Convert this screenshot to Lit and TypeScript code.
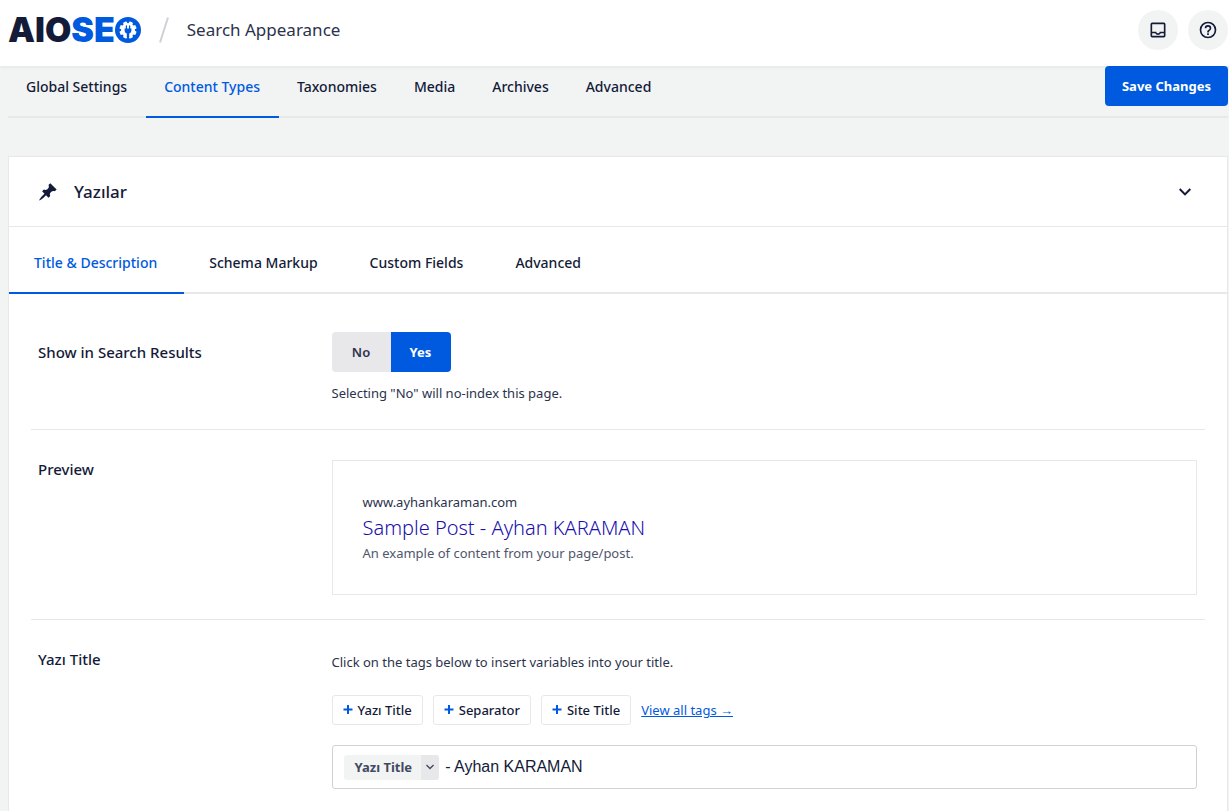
import { LitElement, html, css, svg } from "lit";
import { customElement, state } from "lit/decorators.js";
import { classMap } from "lit/directives/class-map.js";

const MAIN_TABS = ["Global Settings", "Content Types", "Taxonomies", "Media", "Archives", "Advanced"];
const CARD_TABS = ["Title & Description", "Schema Markup", "Custom Fields", "Advanced"];
const TAGS = ["Yazı Title", "Separator", "Site Title"];

const gearTeeth = [0, 45, 90, 135, 180, 225, 270, 315].map(
  (a) => svg`<rect x="11" y="4.4" width="4" height="4" rx="0.8" fill="#fff" transform=${`rotate(${a + 22.5} 13 13)`}/>`
);

const gear = html`<svg class="gear" viewBox="0 0 26 26" aria-hidden="true">
  <circle cx="13" cy="13" r="13" fill="#005ae0" />
  ${gearTeeth}
  <circle cx="13" cy="13" r="7" fill="#fff" />
  <path d="M11.4 9v3M14.6 9v3" stroke="#005ae0" stroke-width="1.3" stroke-linecap="round" />
  <path d="M9.6 11.6h6.8v2.2a2.800 2.800 0 0 1-2.200 2.700v4h-2.400v-4a2.800 2.800 0 0 1-2.200-2.700z" fill="#005ae0" />
</svg>`;

const inbox = html`<svg width="20" height="20" viewBox="0 0 24 24" fill="currentColor" aria-hidden="true">
  <path fill-rule="evenodd" d="M19 3H5a2 2 0 0 0-2 2v14a2 2 0 0 0 2 2h14a2 2 0 0 0 2-2V5a2 2 0 0 0-2-2zm0 16H5v-3h3.56a4 4 0 0 0 6.88 0H19v3zm0-5h-5a2 2 0 0 1-4 0H5V5h14v9z" />
</svg>`;

const help = html`<svg width="20" height="20" viewBox="0 0 24 24" fill="currentColor" aria-hidden="true">
  <path d="M11 18h2v-2h-2v2zm1-16a10 10 0 1 0 0 20 10 10 0 0 0 0-20zm0 18a8 8 0 1 1 0-16 8 8 0 0 1 0 16zm0-14a4 4 0 0 0-4 4h2a2 2 0 1 1 4 0c0 2-3 1.75-3 5h2c0-2.25 3-2.5 3-5a4 4 0 0 0-4-4z" />
</svg>`;

const pin = html`<svg class="pin" width="20" height="20" viewBox="0 0 20 20" fill="currentColor" aria-hidden="true">
  <path d="M10.44 3.02l1.82-1.82 6.36 6.35-1.83 1.82c-1.05-.68-2.48-.57-3.41.36l-.75.75c-.92.93-1.04 2.35-.35 3.41l-1.83 1.82-2.41-2.41-2.8 2.79c-.42.42-3.38 2.71-3.8 2.29s1.86-3.39 2.28-3.81l2.79-2.79L4.1 9.36l1.83-1.82c1.05.69 2.48.57 3.4-.36l.75-.75c.93-.92 1.05-2.35.36-3.41z" />
</svg>`;

const chevron = (size: number) => html`<svg width=${size} height=${size} viewBox="0 0 24 24" fill="currentColor" aria-hidden="true">
  <path d="M7.41 8.29 12 12.88l4.59-4.59L18 9.7l-6 6-6-6z" />
</svg>`;

const plus = html`<svg width="10" height="10" viewBox="0 0 10 10" aria-hidden="true">
  <path d="M5 0v9M0.500 4.500h9" stroke="#005ae0" stroke-width="2" />
</svg>`;

@customElement("app-root")
export class AppRoot extends LitElement {
  static styles = css`
    :host {
      display: flex;
      flex-direction: column;
      height: 100vh;
      overflow: hidden;
      background: #f2f4f4;
      color: #141b38;
      font: 14px/22px "Noto Sans", "Open Sans", sans-serif;
    }
    * { box-sizing: border-box; }
    button, input { font: inherit; color: inherit; margin: 0; }
    button { border: 0; background: none; padding: 0; cursor: pointer; }
    svg { display: block; flex: none; }

    .header {
      display: flex;
      align-items: center;
      flex: none;
      height: 66px;
      padding: 0 1px 6px 8px;
      background: #fff;
      box-shadow: 0 2px 3px #141b380d;
    }
    .logo {
      display: flex;
      align-items: center;
      font: 900 34px/40px Inter, sans-serif;
      color: #141b38;
      text-decoration: none;
    }
    .logo-blue { color: #005ae0; }
    .gear { width: 26px; height: 26px; }
    .slash { margin: 0 18px; }
    .page-title { margin: 0; flex: 1; font-size: 17px; font-weight: 400; line-height: 26px; color: #2c324c; }
    .round {
      display: grid;
      place-items: center;
      width: 40px;
      height: 40px;
      margin-left: 10px;
      border-radius: 50%;
      background: #f2f4f4;
    }

    .toolbar {
      display: flex;
      align-items: flex-start;
      justify-content: space-between;
      flex: none;
      margin: 0 1px 38px 8px;
      border-bottom: 2px solid #e8e8eb;
    }
    .tabs { display: flex; }
    .tab {
      padding: 0 19px 0 18px;
      border-bottom: 2px solid transparent;
      margin-bottom: -2px;
      font-weight: 500;
      white-space: nowrap;
    }
    .toolbar .tab { height: 52px; padding-bottom: 8px; }
    .tab.active { color: #005ae0; border-color: #005ae0; }
    .save {
      height: 40px;
      padding: 0 17px;
      border-radius: 4px;
      background: #005ae0;
      color: #fff;
      font-size: 13px;
      font-weight: 700;
    }

    .card {
      flex: 1 0 auto;
      margin: 0 1px 0 8px;
      border: 1px solid #e8e8eb;
      border-bottom: 0;
      background: #fff;
    }
    .card-head {
      display: flex;
      align-items: center;
      height: 70px;
      padding: 0 30px 0 29px;
      border-bottom: 1px solid #e8e8eb;
    }
    .card-title { margin: 0 0 0 16px; flex: 1; font-size: 17px; font-weight: 500; line-height: 26px; }
    .card-tabs { border-bottom: 2px solid #e8e8eb; }
    .card-tabs .tab { height: 67px; padding: 6px 27px 0 25px; }

    .row {
      display: grid;
      grid-template-columns: 1fr 3fr;
      margin: 0 22px;
      padding: 30px 0 24px;
      border-bottom: 1px solid #e8e8eb;
    }
    .row:first-of-type { padding-top: 38px; }
    .row:last-of-type { border-bottom: 0; }
    .cell { min-width: 0; padding: 0 8px 0 7px; }
    .name { display: block; margin: 0; font-size: 15px; font-weight: 500; line-height: 18px; }
    .row:first-of-type .name { line-height: 40px; }
    .hint { margin: 0; font-size: 13px; line-height: 24px; color: #2c324c; }

    .toggle { display: flex; width: fit-content; margin: 0 0 9px; padding: 0; border: 0; border-radius: 4px; overflow: hidden; }
    .option {
      display: grid;
      place-items: center;
      min-width: 60px;
      height: 40px;
      background: #e8e8eb;
      font-size: 13px;
      font-weight: 600;
      color: #2c324c;
      cursor: pointer;
    }
    .option:first-of-type { min-width: 59px; }
    .option.on { background: #005ae0; color: #fff; font-weight: 700; }
    .option input { appearance: none; position: absolute; width: 0; height: 0; }

    .preview { padding: 30px; border: 1px solid #e8e8eb; }
    .url { font-size: 13px; line-height: 22px; color: #2c324c; }
    .result { display: block; font-size: 20px; font-weight: 300; line-height: 30px; color: #1a0dab; text-decoration: none; }
    .desc { font-size: 13px; line-height: 21px; color: #50566b; }

    .tags { display: flex; align-items: center; gap: 10px; margin: 21px 0 20px; }
    .tag {
      display: flex;
      align-items: center;
      gap: 5px;
      height: 30px;
      padding: 0 10px;
      border: 1px solid #e8e8eb;
      border-radius: 3px;
      font-size: 13px;
      font-weight: 500;
      white-space: nowrap;
    }
    .all { color: #005ae0; font-size: 13px; }
    .editor {
      display: flex;
      align-items: center;
      height: 44px;
      padding: 0 11px;
      border: 1px solid #d0d1d7;
      border-radius: 3px;
      background: #fff;
    }
    .chip {
      display: flex;
      align-items: center;
      border-radius: 3px;
      overflow: hidden;
      background: #f2f4f4;
      color: #434960;
      font-size: 13px;
      font-weight: 700;
      line-height: 25px;
      padding-left: 11px;
      gap: 9px;
      white-space: nowrap;
    }
    .chip-arrow { display: grid; place-items: center; width: 18px; height: 25px; background: #e8e8eb; }
    .text {
      flex: 1;
      min-width: 0;
      margin-left: 6px;
      padding: 0;
      border: 0;
      outline: 0;
      background: none;
      font: 16px/24px "Liberation Sans", Arial, sans-serif;
    }
  `;

  @state() private mainTab = 1;
  @state() private cardTab = 0;
  @state() private show = true;
  @state() private title = "- Ayhan KARAMAN";

  private tabs(names: string[], current: number, pick: (i: number) => void) {
    return names.map(
      (n, i) => html`<button
        role="tab"
        aria-selected=${i === current}
        class=${classMap({ tab: true, active: i === current })}
        @click=${() => pick(i)}
      >${n}</button>`
    );
  }

  private option(label: string, value: boolean) {
    return html`<label class=${classMap({ option: true, on: this.show === value })}>
      <input type="radio" name="show" .checked=${this.show === value} @change=${() => (this.show = value)} />${label}
    </label>`;
  }

  render() {
    return html`
      <header class="header">
        <a class="logo" href="#" aria-label="AIOSEO">AIO<span class="logo-blue">SE</span>${gear}</a>
        <svg class="slash" width="10" height="26" viewBox="0 0 10 26" aria-hidden="true">
          <path d="M9 0.500 1 25.500" stroke="#d0d1d7" stroke-width="2" />
        </svg>
        <h1 class="page-title">Search Appearance</h1>
        <button class="round" aria-label="Notifications">${inbox}</button>
        <button class="round" aria-label="Help">${help}</button>
      </header>

      <div class="toolbar">
        <nav class="tabs" role="tablist">${this.tabs(MAIN_TABS, this.mainTab, (i) => (this.mainTab = i))}</nav>
        <button class="save">Save Changes</button>
      </div>

      <main class="card">
        <div class="card-head">
          ${pin}
          <h2 class="card-title">Yazılar</h2>
          <button aria-label="Collapse">${chevron(24)}</button>
        </div>
        <nav class="tabs card-tabs" role="tablist">${this.tabs(CARD_TABS, this.cardTab, (i) => (this.cardTab = i))}</nav>

        <section class="row">
          <div class="cell"><h3 class="name" id="show-name">Show in Search Results</h3></div>
          <div class="cell">
            <fieldset class="toggle" aria-labelledby="show-name">
              ${this.option("No", false)}${this.option("Yes", true)}
            </fieldset>
            <p class="hint">Selecting "No" will no-index this page.</p>
          </div>
        </section>

        <section class="row">
          <div class="cell"><h3 class="name">Preview</h3></div>
          <div class="cell">
            <div class="preview">
              <div class="url">www.ayhankaraman.com</div>
              <a class="result" href="#">Sample Post - Ayhan KARAMAN</a>
              <div class="desc">An example of content from your page/post.</div>
            </div>
          </div>
        </section>

        <section class="row">
          <div class="cell"><label class="name" for="title">Yazı Title</label></div>
          <div class="cell">
            <p class="hint">Click on the tags below to insert variables into your title.</p>
            <div class="tags">
              ${TAGS.map((t) => html`<button class="tag">${plus}${t}</button>`)}
              <a class="all" href="#">View all tags →</a>
            </div>
            <div class="editor">
              <span class="chip">Yazı Title<button class="chip-arrow" aria-label="Change tag">${chevron(16)}</button></span>
              <input
                class="text"
                id="title"
                type="text"
                .value=${this.title}
                @input=${(e: Event) => (this.title = (e.target as HTMLInputElement).value)}
              />
            </div>
          </div>
        </section>
      </main>
    `;
  }
}
